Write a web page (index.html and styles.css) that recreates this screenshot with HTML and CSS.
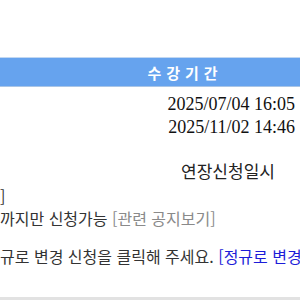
FILE: index.html
```html
<!DOCTYPE html>
<html lang="ko">
<head>
<meta charset="utf-8">
<link rel="stylesheet" href="styles.css">
</head>
<body>
<div class="page">
  <div class="head"><span class="head-title">수강기간</span></div>
  <div class="dates">
    <div class="date">2025/07/04 16:05</div>
    <div class="date">2025/11/02 14:46</div>
  </div>
  <div class="ext">연장신청일시</div>
  <div class="notes">
    <div class="line">]</div>
    <div class="line">까지만 신청가능 <span class="muted">[관련 공지보기]</span></div>
    <div class="line gap">규로 변경 신청을 클릭해 주세요. <span class="link">[정규로 변경</span></div>
  </div>
  <div class="foot"></div>
</div>
</body>
</html>
```
FILE: styles.css
```css
html, body {
  margin: 0;
  padding: 0;
  background: #fff;
  overflow: hidden;
}
.page {
  width: 300px;
  height: 300px;
  overflow: hidden;
  display: flex;
  flex-direction: column;
  padding-top: 57px;
  box-sizing: border-box;
  font-family: "Noto Sans CJK KR", "Noto Sans", sans-serif;
  color: #333;
}
.head {
  height: 28px;
  background: #66a3ee;
  border-top: 1px solid #c2d8f2;
  border-bottom: 1px solid #a9c5e6;
  display: flex;
  align-items: center;
  justify-content: center;
  padding-left: 70px;
}
.head-title {
  color: #fff;
  font-weight: bold;
  font-size: 15px;
  letter-spacing: 5px;
  line-height: 1;
}
.dates {
  padding-top: 6px;
  padding-right: 5px;
  display: flex;
  flex-direction: column;
  align-items: flex-end;
}
.date {
  font-family: "Liberation Serif", "Times New Roman", serif;
  font-size: 18px;
  line-height: 23px;
  color: #111;
  white-space: nowrap;
}
.ext {
  margin-top: 22px;
  padding-left: 156px;
  text-align: center;
  font-size: 17px;
  line-height: 20px;
  color: #222;
}
.notes {
  margin-top: 4px;
  display: flex;
  flex-direction: column;
}
.line {
  font-size: 16px;
  line-height: 22px;
  white-space: nowrap;
  color: #333;
}
.line.gap {
  margin-top: 16px;
}
.muted {
  color: #8a8a8a;
}
.link {
  color: #1c1cd8;
}
.foot {
  margin-top: auto;
  height: 3px;
  background: #e2e2e2;
}
```
